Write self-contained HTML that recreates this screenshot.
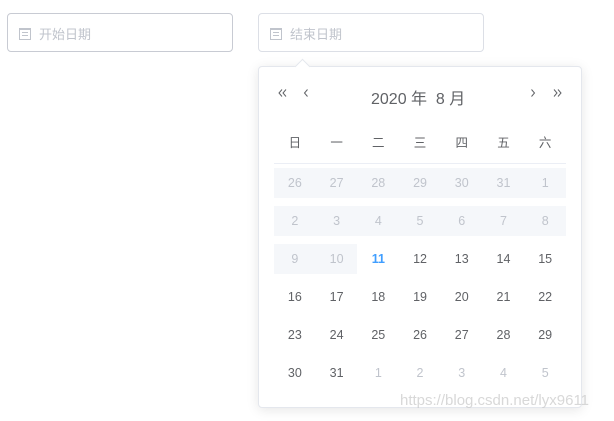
<!DOCTYPE html>
<html><head><meta charset="utf-8"><style>
body{margin:0;width:614px;height:421px;background:#fff;position:relative;overflow:hidden;font-family:"Liberation Sans","Noto Sans CJK SC",sans-serif;}
.inp{position:absolute;top:13px;height:37px;border:1px solid #c8cbd3;border-radius:4px;box-sizing:content-box;}
.inp span{position:absolute;left:31px;top:10px;font-size:13px;color:#c0c4cc;}
.ic{position:absolute;left:11px;top:14px;width:10px;height:9px;border:1px solid #c0c4cc;border-top-width:2px;}
.ic:after{content:"";position:absolute;left:2px;right:2px;top:2px;height:1px;background:#c0c4cc;box-shadow:0 3px 0 #c0c4cc;}
.panel{position:absolute;left:258px;top:66px;width:322px;height:340px;border:1px solid #e4e7ed;border-radius:4px;box-shadow:0 2px 12px rgba(0,0,0,.1);background:#fff;}
.arrow{position:absolute;left:297px;top:61px;width:10px;height:10px;background:#fff;border-left:1px solid #e4e7ed;border-top:1px solid #e4e7ed;transform:rotate(45deg);}
.hd{position:absolute;top:85px;font-size:16px;color:#606266;}
svg.nav{position:absolute;top:88px;}
.row{position:absolute;left:274px;width:292px;height:30px;display:flex;}
.row div{flex:1;text-align:center;line-height:30px;font-size:12.5px;color:#606266;}
.g div{color:#c0c4cc}
.bg{background:#f5f7fa}
</style></head><body>
<div class="inp" style="left:7px;width:224px;"><i class="ic"></i><span>开始日期</span></div>
<div class="inp" style="left:258px;width:224px;border-color:#dcdfe6"><i class="ic"></i><span>结束日期</span></div>
<div class="panel"></div>
<div class="arrow"></div>
<svg class="nav" style="left:278px" width="10" height="10" fill="none" stroke="#606266" stroke-width="1"><path d="M4 1.5L1 5l3 3.5M8 1.5L5 5l3 3.5"/></svg>
<svg class="nav" style="left:303px" width="6" height="10" fill="none" stroke="#606266" stroke-width="1"><path d="M4.5 1.5L1.5 5l3 3.5"/></svg>
<div class="hd" style="left:371px;">2020 年&nbsp; 8 月</div>
<svg class="nav" style="left:530px" width="6" height="10" fill="none" stroke="#606266" stroke-width="1"><path d="M1.5 1.5L4.5 5l-3 3.5"/></svg>
<svg class="nav" style="left:552px" width="10" height="10" fill="none" stroke="#606266" stroke-width="1"><path d="M2 1.5L5 5 2 8.5M6 1.5L9 5 6 8.5"/></svg>
<div class="row" style="top:128px"><div>日</div><div>一</div><div>二</div><div>三</div><div>四</div><div>五</div><div>六</div></div>
<div style="position:absolute;left:274px;top:163px;width:292px;height:1px;background:#ebeef5"></div>
<div class="row g bg" style="top:168px"><div>26</div><div>27</div><div>28</div><div>29</div><div>30</div><div>31</div><div>1</div></div>
<div class="row g bg" style="top:206px"><div>2</div><div>3</div><div>4</div><div>5</div><div>6</div><div>7</div><div>8</div></div>
<div class="row" style="top:244px"><div class="bg" style="color:#c0c4cc">9</div><div class="bg" style="color:#c0c4cc">10</div><div style="color:#409eff;font-weight:bold">11</div><div>12</div><div>13</div><div>14</div><div>15</div></div>
<div class="row" style="top:282px"><div>16</div><div>17</div><div>18</div><div>19</div><div>20</div><div>21</div><div>22</div></div>
<div class="row" style="top:320px"><div>23</div><div>24</div><div>25</div><div>26</div><div>27</div><div>28</div><div>29</div></div>
<div class="row" style="top:358px"><div>30</div><div>31</div><div style="color:#c0c4cc">1</div><div style="color:#c0c4cc">2</div><div style="color:#c0c4cc">3</div><div style="color:#c0c4cc">4</div><div style="color:#c0c4cc">5</div></div>
<div style="position:absolute;left:400px;top:392px;font-size:15px;color:rgba(200,200,200,.7)">https://blog.csdn.net/lyx9611</div>
</body></html>
